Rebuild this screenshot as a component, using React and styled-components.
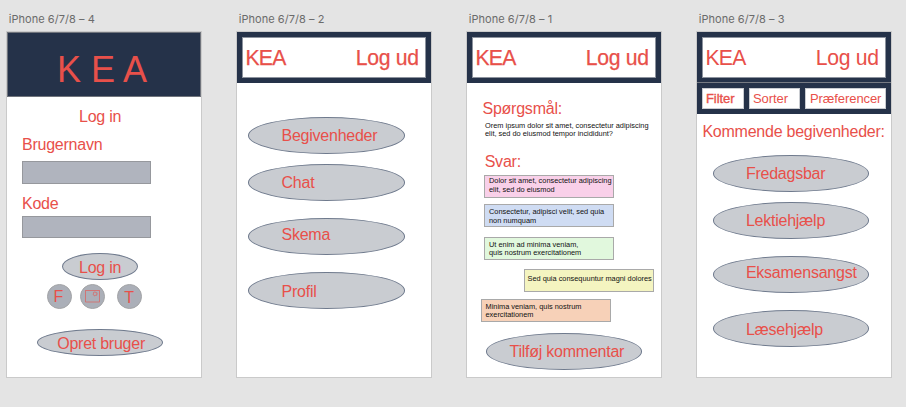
import React from "react";
import styled, { createGlobalStyle, css } from "styled-components";

const coral = "#e8504a";
const navy = "#253249";

const GlobalStyle = createGlobalStyle`
  body {
    margin: 0;
    background: #e4e4e4;
    font-family: "Liberation Sans", Arial, sans-serif;
  }
`;

const placed = css`
  flex: none;
  margin-top: ${(p) => p.$mt || 0}px;
  margin-left: ${(p) => p.$ml || 0}px;
`;

const labelText = css`
  color: ${coral};
  font-size: 16px;
  letter-spacing: -0.24px;
  line-height: 17px;
  white-space: nowrap;
`;

const Canvas = styled.main`
  display: flex;
  gap: 34px;
  box-sizing: border-box;
  width: 906px;
  height: 407px;
  padding: 12px 0 0 6px;
  overflow: hidden;
  background: #e4e4e4;
`;

const Artboard = styled.section`
  flex: none;
  width: 196px;
`;

const ArtboardName = styled.div`
  height: 19px;
  padding-left: 2.8px;
  font: 11px/14px Inter, sans-serif;
  letter-spacing: 0.04px;
  color: #6b6b6b;
  white-space: nowrap;
`;

const Screen = styled.div`
  display: flex;
  flex-direction: column;
  align-items: flex-start;
  width: 194px;
  height: 345px;
  border: 1px solid #cacaca;
  background: #fff;
`;

const Hero = styled.header`
  box-sizing: border-box;
  width: 194px;
  height: 65px;
  padding: 16px 0 0 49px;
  border: 1px solid #70747c;
  background: ${navy};
  color: ${coral};
  font-size: 36px;
  line-height: 41px;
  white-space: nowrap;
`;

const TopBar = styled.header`
  box-sizing: border-box;
  width: 194px;
  height: 51px;
  padding: 5px;
  border-bottom: ${(p) => (p.$divided ? "1px solid #777b84" : "none")};
  background: ${navy};
`;

const TopBarInner = styled.div`
  display: flex;
  justify-content: space-between;
  box-sizing: border-box;
  width: 184px;
  height: 41px;
  padding: 8px 6.2px 0 2.5px;
  border: 1px solid #8d939e;
  background: #fff;
  color: ${coral};
  font-size: 21.2px;
  letter-spacing: -0.3px;
  line-height: 23px;
  white-space: nowrap;
  -webkit-text-stroke: ${(p) => (p.$strong ? 0.25 : 0)}px ${coral};
`;

const LogoText = styled.span`
  letter-spacing: -0.8px;
`;

const FilterBar = styled.nav`
  display: flex;
  gap: 5px;
  box-sizing: border-box;
  width: 194px;
  height: 31px;
  padding: 5px;
  background: ${navy};
`;

const FilterTab = styled.div`
  box-sizing: border-box;
  width: ${(p) => p.$width}px;
  height: 21px;
  padding: 2px 0 0 ${(p) => p.$inset}px;
  background: #fff;
  border: 1px solid #c9ccd1;
  color: ${coral};
  font-size: 13px;
  letter-spacing: -0.08px;
  line-height: 15px;
  white-space: nowrap;
  -webkit-text-stroke: ${(p) => (p.$strong ? 0.35 : 0)}px ${coral};
`;

const Label = styled.div`
  ${placed}
  ${labelText}
`;

const Field = styled.div`
  ${placed}
  box-sizing: border-box;
  width: 129.4px;
  height: ${(p) => p.$height}px;
  border: 1px solid #96989d;
  background: #b0b4be;
`;

const Oval = styled.div`
  ${placed}
  ${labelText}
  box-sizing: border-box;
  width: ${(p) => p.$width || 156.5}px;
  height: ${(p) => p.$height || 36.5}px;
  padding: ${(p) => p.$pt}px 0 0 ${(p) => p.$pl}px;
  border: 1px solid #6f7a8d;
  border-radius: 50%;
  background: #c9ccd1;
`;

const SocialRow = styled.div`
  display: flex;
  height: 25px;
  margin: 3.5px 0 0 39.5px;
`;

const SocialButton = styled.div`
  ${labelText}
  flex: none;
  box-sizing: border-box;
  width: 25px;
  height: 25px;
  margin-right: ${(p) => p.$gap || 0}px;
  padding: ${(p) => p.$pt}px 0 0 ${(p) => p.$pl}px;
  border: 1px solid #a3a4a6;
  border-radius: 50%;
  background: #abafb8;
  svg {
    display: block;
  }
`;

const Question = styled.p`
  margin: 5px 0 0 18px;
  color: #111;
  font-size: 7.38px;
  line-height: 8px;
  white-space: pre;
`;

const Answer = styled.div`
  ${placed}
  box-sizing: border-box;
  width: 130px;
  height: 23px;
  padding: ${(p) => p.$pt}px 0 0 ${(p) => p.$pl || 4.5}px;
  border: 1px solid #a9a9a9;
  background: ${(p) => p.$fill};
  color: #111;
  font-size: 7.38px;
  line-height: ${(p) => p.$leading || 8}px;
  white-space: pre;
`;

const PictureIcon = () => (
  <svg width="15" height="13" viewBox="0 0 15 13" fill="none" stroke={coral} strokeWidth="0.6">
    <rect x="0.7" y="0.6" width="13.6" height="11.4" />
    <path d="M10 1.9 L11 2.6 L12.1 2.9 L11.9 4 L11.8 5.2 L10.6 5.3 L9.6 6 L8.9 5 L8 4.4 L8.5 3.4 L8.6 2.3 Z" />
  </svg>
);

const Bar = ({ strong, divided }) => (
  <TopBar $divided={divided}>
    <TopBarInner $strong={strong}>
      <LogoText>KEA</LogoText>
      <span>Log ud</span>
    </TopBarInner>
  </TopBar>
);

const Board = ({ name, children }) => (
  <Artboard>
    <ArtboardName>{name}</ArtboardName>
    <Screen>{children}</Screen>
  </Artboard>
);

const menu = [
  { text: "Begivenheder", mt: 34, pt: 9 },
  { text: "Chat", mt: 10.5, pt: 9 },
  { text: "Skema", mt: 17.5, pt: 7 },
  { text: "Profil", mt: 17.5, pt: 10 },
];

const events = [
  { text: "Fredagsbar", mt: 15, pt: 9 },
  { text: "Lektiehjælp", mt: 10.5, pt: 9 },
  { text: "Eksamensangst", mt: 17.5, pt: 7 },
  { text: "Læsehjælp", mt: 17.5, pt: 10 },
];

const answers = [
  { text: "Dolor sit amet, consectetur adipiscing\nelit, sed do eiusmod", fill: "#f9d0e9", mt: 5, ml: 16.5, pt: 0, leading: 9 },
  { text: "Consectetur, adipisci velit, sed quia\nnon numquam", fill: "#cfdcf3", mt: 6, ml: 16.5, pt: 2, leading: 9 },
  { text: "Ut enim ad minima veniam,\nquis nostrum exercitationem", fill: "#e1f8dd", mt: 10, ml: 16.5, pt: 2.5 },
  { text: "Sed quia consequuntur magni dolores", fill: "#f4f4c0", mt: 9, ml: 57, pt: 4.5, pl: 2.5 },
  { text: "Minima veniam, quis nostrum\nexercitationem", fill: "#f7d1b8", mt: 7, ml: 14, pt: 3, pl: 3.5 },
];

export default function App() {
  return (
    <>
      <GlobalStyle />
      <Canvas>
        <Board name="iPhone 6/7/8 – 4">
          <Hero>K E A</Hero>
          <Label $mt={11} $ml={72}>Log in</Label>
          <Label $mt={11} $ml={15}>Brugernavn</Label>
          <Field $mt={8} $ml={15} $height={23} />
          <Label $mt={11} $ml={15}>Kode</Label>
          <Field $mt={4} $ml={15} $height={22} />
          <Oval $mt={15} $ml={55} $width={75.5} $height={27} $pt={5} $pl={16}>Log in</Oval>
          <SocialRow>
            <SocialButton $gap={8} $pt={3.5} $pl={6}>F</SocialButton>
            <SocialButton $gap={12} $pt={5.5} $pl={4}>
              <PictureIcon />
            </SocialButton>
            <SocialButton $pt={4.5} $pl={6.7}>T</SocialButton>
          </SocialRow>
          <Oval $mt={20.5} $ml={30} $width={126} $height={27} $pt={5} $pl={19.2}>Opret bruger</Oval>
        </Board>

        <Board name="iPhone 6/7/8 – 2">
          <Bar strong />
          {menu.map((m) => (
            <Oval key={m.text} $mt={m.mt} $ml={11} $pt={m.pt} $pl={32.5}>{m.text}</Oval>
          ))}
        </Board>

        <Board name="iPhone 6/7/8 – 1">
          <Bar strong />
          <Label $mt={17} $ml={15.5}>Spørgsmål:</Label>
          <Question>{"Orem ipsum dolor sit amet, consectetur adipiscing\nelit, sed do eiusmod tempor incididunt?"}</Question>
          <Label $mt={15} $ml={17.7}>Svar:</Label>
          {answers.map((a) => (
            <Answer key={a.fill} $fill={a.fill} $mt={a.mt} $ml={a.ml} $pt={a.pt} $pl={a.pl} $leading={a.leading}>
              {a.text}
            </Answer>
          ))}
          <Oval $mt={11} $ml={18.5} $pt={9} $pl={23}>Tilføj kommentar</Oval>
        </Board>

        <Board name="iPhone 6/7/8 – 3">
          <Bar divided />
          <FilterBar>
            <FilterTab $width={42} $inset={3} $strong>Filter</FilterTab>
            <FilterTab $width={51} $inset={3}>Sorter</FilterTab>
            <FilterTab $width={81} $inset={4}>Præferencer</FilterTab>
          </FilterBar>
          <Label $mt={9} $ml={5.4}>Kommende begivenheder:</Label>
          {events.map((m) => (
            <Oval key={m.text} $mt={m.mt} $ml={15.5} $pt={m.pt} $pl={32.4}>{m.text}</Oval>
          ))}
        </Board>
      </Canvas>
    </>
  );
}
